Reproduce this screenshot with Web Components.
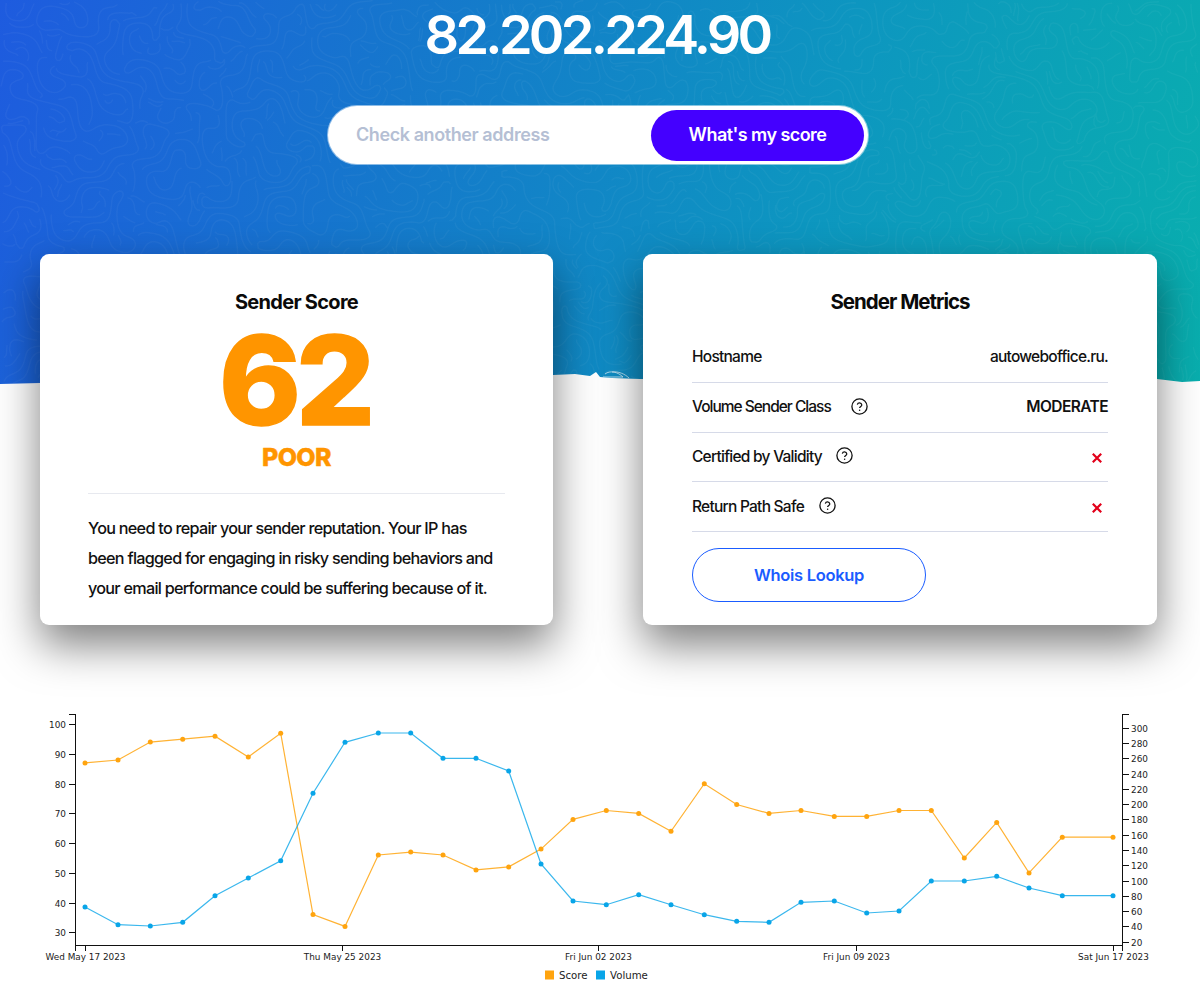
<!DOCTYPE html>
<html lang="en"><head><meta charset="utf-8"><title>Sender Score</title>
<style>
html,body{margin:0;padding:0;background:#fff}
body{width:1200px;height:987px;overflow:hidden;font-family:Inter,"Liberation Sans",sans-serif;color:#0b0b0b}
</style></head><body>
<sv-page>
  <sv-hero-bg></sv-hero-bg>
  <sv-title>82.202.224.90</sv-title>
  <sv-search placeholder="Check another address" action="What's my score"></sv-search>
  <sv-cards>
    <sv-card heading="Sender Score">
      <sv-score value="62" label="POOR"></sv-score>
      <sv-copy>You need to repair your sender reputation. Your IP has<br>been flagged for engaging in risky sending behaviors and<br>your email performance could be suffering because of it.</sv-copy>
    </sv-card>
    <sv-card heading="Sender Metrics" kind="metrics">
      <sv-row label="Hostname">autoweboffice.ru.</sv-row>
      <sv-row label="Volume Sender Class" help="20" ls="-1"><b>MODERATE</b></sv-row>
      <sv-row label="Certified by Validity" help="14"><sv-cross></sv-cross></sv-row>
      <sv-row label="Return Path Safe" help="15"><sv-cross></sv-cross></sv-row>
      <sv-link-button>Whois Lookup</sv-link-button>
    </sv-card>
  </sv-cards>
  <sv-chart></sv-chart>
</sv-page>
<script>
const def=(name,html,setup)=>customElements.define(name,class extends HTMLElement{
  constructor(){super();const r=this.attachShadow({mode:'open'});r.innerHTML=typeof html==='function'?html(this):html;}
  connectedCallback(){
    if(typeof html==='function')this.shadowRoot.innerHTML=html(this);
    if(setup)setup(this);
  }
});
def('sv-page',`<style>:host{display:block;position:relative;width:1200px;height:987px;overflow:hidden}</style><slot></slot>`);

/* labyrinth texture: evenly spaced streamlines of a smooth field */
function worms(){
  const W=1200,H=390,C=4,cols=Math.ceil(W/C),rows=Math.ceil(H/C),grid=new Int32Array(cols*rows).fill(-1);
  let s=12345;const rnd=()=>(s=(s*1664525+1013904223)>>>0)/4294967296;
  const field=(x,y)=>3.4*(Math.sin(x*.045+1.3*Math.sin(y*.033))+Math.sin(y*.052-x*.018+2)+.7*Math.sin((x+y)*.08)+.5*Math.sin(x*.12-y*.1+1));
  const seeds=[];for(let r=0;r<rows;r++)for(let c=0;c<cols;c++)seeds.push([c,r]);
  for(let i=seeds.length-1;i>0;i--){const j=Math.floor(rnd()*(i+1));[seeds[i],seeds[j]]=[seeds[j],seeds[i]];}
  let d='',id=0;
  const free=(x,y,me)=>{const c=Math.floor(x/C),r=Math.floor(y/C);if(c<0||r<0||c>=cols||r>=rows)return false;const v=grid[r*cols+c];return v===-1||v===me;};
  for(const [c,r] of seeds){
    if(grid[r*cols+c]!==-1)continue;
    id++;
    const line=[];
    for(const dir of [1,-1]){
      let x=(c+.5)*C,y=(r+.5)*C;const part=[];
      for(let k=0;k<50;k++){
        const a=field(x,y);x+=dir*2.5*Math.cos(a);y+=dir*2.5*Math.sin(a);
        if(!free(x,y,id)||!free(x+dir*3*Math.cos(a),y+dir*3*Math.sin(a),id))break;
        grid[Math.floor(y/C)*cols+Math.floor(x/C)]=id;part.push([x,y]);
      }
      if(dir===1)line.push(...part);else line.unshift(...part.reverse());
    }
    grid[r*cols+c]=id;
    if(line.length>4)d+='M'+line.map(p=>p[0].toFixed(1)+' '+p[1].toFixed(1)).join('L');
  }
  return d;
}
const edge="0 0,1200px 0,1200px 381px,1182px 382px,1157px 379px,640px 379px,612px 378px,600px 377px,596px 372px,590px 376px,575px 374px,553px 375px,40px 383px,0 384px";
def('sv-hero-bg',`<style>
:host{display:block;position:absolute;left:0;top:0;width:1200px;height:390px;clip-path:polygon(${edge});
background:linear-gradient(105deg,#1e5bdf 0%,#1578cc 33%,#0d96c0 66%,#09afae 100%)}
svg{display:block;position:absolute;left:0;top:0;width:100%;height:100%}
</style><svg aria-hidden="true"><path d="${worms()}" fill="none" stroke="#fff" stroke-opacity=".04" stroke-width="1.5" stroke-linecap="round" stroke-linejoin="round"/></svg>
<svg aria-hidden="true" fill="none" stroke="#fff" stroke-width=".8" opacity=".8"><path d="M605 374c5-4 13-2 18 3M612 372c6-1 13 2 17 6M603 377h20"/></svg>`);

def('sv-title',`<style>:host{display:block;position:relative;text-align:center;padding-top:3px;height:106px;box-sizing:border-box;margin-left:-6px;color:#fff;font:600 54px/64px Inter,sans-serif;letter-spacing:-3.7px}</style><slot></slot>`);

def('sv-search',h=>`<style>
:host{display:block;position:relative;width:540px;height:58px;margin:0 0 0 328px;box-sizing:border-box;background:#fff;border-radius:29px;box-shadow:0 0 0 1px rgba(255,255,255,.5)}
.w{display:flex;align-items:center;justify-content:space-between;height:100%;padding:0 4px 0 28px}
.p{font:600 18px/24px Inter,sans-serif;letter-spacing:-.42px;color:#b5bfd4}
.b{display:flex;align-items:center;justify-content:center;width:213px;height:51px;border-radius:26px;background:#4400ff;color:#fff;font:600 18px/24px Inter,sans-serif;letter-spacing:-.55px}
</style><div class="w"><span class="p">${h.getAttribute('placeholder')||''}</span><span class="b">${h.getAttribute('action')||''}</span></div>`);

def('sv-cards',`<style>:host{display:grid;position:relative;grid-template-columns:513px 514px;gap:90px;margin:90px 0 0 40px;width:1117px}</style><slot></slot>`);

def('sv-card',h=>{const m=h.getAttribute('kind')==='metrics';return `<style>
:host{display:block;box-sizing:border-box;height:371px;background:#fff;border-radius:9px;box-shadow:0 20px 44px rgba(0,0,0,.5);padding:34px ${m?49:48}px 0}
h2{margin:0;text-align:center;font:700 ${m?'20.5px':'20px'}/28px Inter,sans-serif;letter-spacing:${m?'-1px':'-.7px'};color:#0a0a0a}
.gap{height:${m?17:0}px}
</style><h2>${h.getAttribute('heading')||''}</h2><div class="gap"></div><slot></slot>`});

def('sv-score',h=>`<style>
:host{display:block;text-align:center;color:#ff9500;border-bottom:1px solid #e7e9ef;height:178px;box-sizing:border-box;font-family:Inter,sans-serif}
.n{font-weight:800;font-size:124px;line-height:112px;letter-spacing:-5px;height:112px;padding:8px 4px 0 0;-webkit-text-stroke:1.5px #ff9500}
.l{font-weight:800;font-size:25px;line-height:30px;letter-spacing:-.6px;margin-top:6px;-webkit-text-stroke:.4px #ff9500}
</style><div class="n">${h.getAttribute('value')}</div><div class="l">${h.getAttribute('label')}</div>`);

def('sv-copy',`<style>:host{display:block;margin-top:19px;font:500 16.2px/30px Inter,sans-serif;letter-spacing:-.72px;white-space:nowrap;color:#111}</style><slot></slot>`);

def('sv-help',`<style>:host{display:inline-flex;width:17px;height:17px}svg{display:block}</style>
<svg viewBox="0 0 17 17" width="17" height="17" fill="none" stroke="#111" aria-hidden="true"><circle cx="8.5" cy="8.5" r="7.6" stroke-width="1.3"/><path d="M6.3 6.7a2.3 2.3 0 0 1 4.5.2c0 1.5-2.2 1.6-2.2 3.2" stroke-width="1.2"/><path d="M8.6 11.6v1.3" stroke-width="1.3"/></svg>`);

def('sv-cross',`<style>:host{display:inline-flex;width:10px;height:10px;margin:3px 6px 0 0}svg{display:block}</style>
<svg viewBox="0 0 10 10" width="10" height="10" stroke="#e2001a" stroke-width="2.2" aria-hidden="true"><path d="M.8.8 9.2 9.2M9.2.8.8 9.2"/></svg>`);

def('sv-row',h=>`<style>
:host{display:flex;align-items:center;justify-content:space-between;box-sizing:border-box;height:49.75px;border-bottom:1.5px solid #d6dae8;font:500 15.5px/22px Inter,sans-serif;letter-spacing:-.75px;color:#111}
.l{display:flex;align-items:center;gap:${h.getAttribute('help')||0}px}
.t{letter-spacing:${h.getAttribute('ls')||-.75}px}
sv-help{margin-top:-2px}
.v{display:flex;align-items:center}
::slotted(b){font-weight:600;letter-spacing:-.6px}
</style><span class="l"><span class="t">${h.getAttribute('label')}</span>${h.hasAttribute('help')?'<sv-help></sv-help>':''}</span><span class="v"><slot></slot></span>`);

def('sv-link-button',`<style>
:host{display:flex;align-items:center;justify-content:center;box-sizing:border-box;width:234px;height:54px;margin-top:16px;border:1px solid #1a5cff;border-radius:27px;color:#1a5cff;font:600 16.5px/22px Inter,sans-serif;letter-spacing:-.3px}
</style><slot></slot>`);

const xs=[85,118,150.3,182.7,215,248.3,280.7,313,345,378.3,410.7,443,476,508.7,541,573,606.3,638.7,671,704.3,736.7,769,801,834.3,866.7,899,931.3,964.3,996.7,1029,1062.3,1113];
const score=[87,88,94,95,96,89,97,36,32,56,57,56,51,52,58,68,71,70,64,80,73,70,71,69,69,71,71,55,67,50,62,62];
const volY=[907,924.7,926,922.3,895.7,878,860.7,793.3,742.3,733,733,758.3,758.3,771,864,901,904.7,894.7,904.7,914.7,921.3,922.3,902.3,901,913,911,881,881,876.3,888,895.7,895.7];
const sy=v=>724.3+(100-v)*2.9714, O='#ffa40f', B='#09a5e8';
const pts=a=>a.map((y,i)=>xs[i]+','+y.toFixed(1)).join(' ');
const dots=(a,c)=>a.map((y,i)=>`<circle cx="${xs[i]}" cy="${y.toFixed(1)}" r="2.5" fill="${c}"/>`).join('');
const scoreY=score.map(sy);
let ticks='';
for(let v=30;v<=100;v+=10){const y=Math.round(sy(v))+.5;ticks+=`<path d="M69 ${y}H75"/><text x="66" y="${y+3.5}" text-anchor="end">${v}</text>`;}
for(let v=20;v<=300;v+=20){const y=Math.round(941.7-(v-20)*.7643)+.5;ticks+=`<path d="M1123 ${y}H1129"/><text x="1131" y="${y+3.5}">${v}</text>`;}
[[85.5,'Wed May 17 2023'],[342.5,'Thu May 25 2023'],[598.5,'Fri Jun 02 2023'],[856.5,'Fri Jun 09 2023'],[1113.5,'Sat Jun 17 2023']].forEach(([x,t])=>{ticks+=`<path d="M${x} 945V951"/><text x="${x}" y="960" text-anchor="middle">${t}</text>`});
def('sv-chart',`<style>:host{display:block;position:absolute;left:0;top:700px;width:1200px;height:287px}svg{display:block;font:8.9px "DejaVu Sans",sans-serif;fill:#222}.lg{font-size:10.2px}</style>
<svg width="1200" height="287" viewBox="0 700 1200 287" role="img" aria-label="Score and volume over time">
<g fill="none" stroke="#111" stroke-width="1"><path d="M69 714.5H75V945.5H1122.5V714.5H1129M75 945.5V951M1122.5 945.5V951" shape-rendering="crispEdges"/></g>
<g stroke="#111" fill="#222" shape-rendering="crispEdges" class="t">${ticks.replace(/<text /g,'<text stroke="none" ')}</g>
<polyline points="${pts(scoreY)}" fill="none" stroke="${O}" stroke-opacity=".85" stroke-width="1.2"/>
<polyline points="${pts(volY)}" fill="none" stroke="${B}" stroke-opacity=".8" stroke-width="1.2"/>
${dots(scoreY,O)}${dots(volY,B)}
<rect x="545" y="970.5" width="9" height="9" fill="${O}"/><text class="lg" x="559" y="979">Score</text>
<rect x="596" y="970.5" width="9" height="9" fill="${B}"/><text class="lg" x="610" y="979">Volume</text>
</svg>`);
</script>
</body></html>
